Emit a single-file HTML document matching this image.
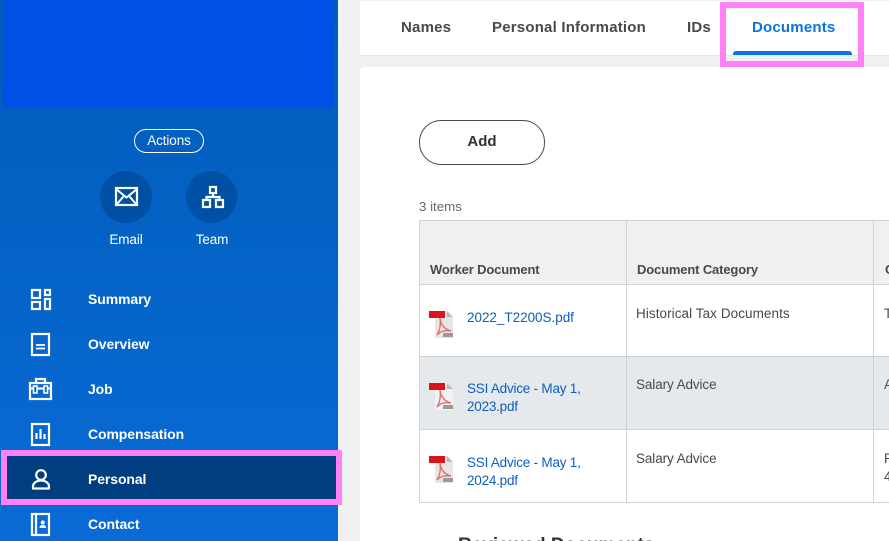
<!DOCTYPE html>
<html><head><meta charset="utf-8">
<style>
html,body{margin:0;padding:0;width:889px;height:541px;overflow:hidden;background:#eff0f2;font-family:"Liberation Sans",sans-serif;}
#root{position:relative;width:889px;height:541px;overflow:hidden;}
.a{position:absolute;white-space:nowrap;}
#side{left:0;top:0;width:338px;height:541px;background:linear-gradient(180deg,#005cb9 0%,#0a6bd6 100%);}
.nav{left:88px;color:#fff;font-weight:bold;font-size:14px;line-height:18px;letter-spacing:-.1px;}
.tab{top:18px;font-size:15px;font-weight:bold;line-height:20px;color:#494949;letter-spacing:.2px;}
.hd{top:262px;font-size:13px;font-weight:bold;color:#494949;line-height:16px;letter-spacing:-.15px;}
.lnk{left:467px;font-size:13.5px;line-height:18px;color:#0b5fc0;letter-spacing:-.22px;}
.cell{left:636px;font-size:13.5px;line-height:18px;color:#494949;letter-spacing:-.1px;}
.line{background:#d0d2d5;}
svg{position:absolute;overflow:visible;}
.pdf{filter:blur(.3px);}
</style></head><body>
<div id="root">
<div class="a" id="side"></div>
<div class="a" style="left:3px;top:0;width:331px;height:108px;background:#0050e6"></div>

<div class="a" style="left:134px;top:129px;width:68px;height:22px;border:1px solid #fff;border-radius:12px;color:#fff;font-size:13.5px;line-height:22px;text-align:center;letter-spacing:-.1px">Actions</div>

<div class="a" style="left:100px;top:171px;width:52px;height:52px;border-radius:50%;background:#0050a5"></div>
<div class="a" style="left:186px;top:171px;width:51px;height:52px;border-radius:50%;background:#0050a5"></div>
<svg style="left:115px;top:187px" width="23" height="19" fill="none" stroke="#fff" stroke-width="2.200"><rect x="1" y="1" width="21" height="17"/><path d="M1 2l10.500 8.500L22 2M2 17l6.500-7.500M21 17l-6.500-7.500" stroke-width="2"/></svg>
<svg style="left:200px;top:185px" width="25" height="24" fill="none" stroke="#fff" stroke-width="2.200"><rect x="10" y="2" width="6" height="6"/><rect x="3" y="15" width="7" height="7"/><rect x="16" y="15" width="7" height="7"/><path d="M13 9v3M6.500 14v-2h13v2"/></svg>
<div class="a" style="left:96px;width:60px;top:231px;text-align:center;color:#fff;font-size:13.5px;line-height:17px;letter-spacing:-.1px">Email</div>
<div class="a" style="left:182px;width:60px;top:231px;text-align:center;color:#fff;font-size:13.5px;line-height:17px;letter-spacing:-.1px">Team</div>

<svg style="left:30px;top:289px" width="21" height="21" fill="none" stroke="#fff" stroke-width="2.200"><rect x="2" y="1" width="8" height="8"/><rect x="15" y="1" width="5" height="5"/><rect x="2" y="13" width="8" height="7"/><rect x="15" y="10" width="5" height="10"/></svg>
<svg style="left:31px;top:333px" width="19" height="23" fill="none" stroke="#fff" stroke-width="2.200"><rect x="1" y="1" width="17" height="21"/><path d="M5 12h9M5 15.500h9" stroke-width="1.700"/></svg>
<svg style="left:29px;top:378px" width="23" height="22" fill="none" stroke="#fff" stroke-width="2.200"><rect x="1" y="5" width="21" height="16"/><path d="M7 5V1h9v4M1 10.500h21"/><rect x="4.500" y="8" width="3.500" height="7" stroke-width="1.600" fill="#0366cc"/><rect x="15" y="8" width="3.500" height="7" stroke-width="1.600" fill="#0366cc"/></svg>
<svg style="left:31px;top:423px" width="19" height="23" fill="none" stroke="#fff" stroke-width="2.200"><rect x="1" y="1" width="17" height="21"/><path d="M5.500 16v-6M9.500 16V6M13.500 16v-5"/></svg>

<div class="a" style="left:1px;top:450px;width:329px;height:43px;background:#003e7f;border:6px solid #ff80f7"></div>
<svg style="left:31px;top:468px" width="19" height="22" fill="none" stroke="#fff" stroke-width="2.200"><circle cx="10" cy="7" r="4.800"/><path d="M2 20.500v-2c0-3 3-6 8-6s8 3 8 6v2z" stroke-linejoin="round"/></svg>
<svg style="left:31px;top:513px" width="19" height="23" fill="none" stroke="#fff" stroke-width="2.200"><rect x="1" y="1" width="17" height="21"/><path d="M5 1v21"/><circle cx="11.800" cy="9.500" r="2" fill="#fff" stroke="none"/><path d="M8.500 15c0-2.500 1.500-3 3.300-3s3.200.5 3.200 3z" fill="#fff" stroke="none"/></svg>

<div class="a nav" style="top:290px">Summary</div>
<div class="a nav" style="top:335px">Overview</div>
<div class="a nav" style="top:380px">Job</div>
<div class="a nav" style="top:425px">Compensation</div>
<div class="a nav" style="top:470px">Personal</div>
<div class="a nav" style="top:515px">Contact</div>

<div class="a" style="left:360px;top:1px;width:529px;height:54px;background:#fff;border-bottom:1px solid #e2e4e6"></div>
<div class="a tab" style="left:401px">Names</div>
<div class="a tab" style="left:492px">Personal Information</div>
<div class="a tab" style="left:687px">IDs</div>
<div class="a tab" style="left:752px;color:#0875e1">Documents</div>
<div class="a" style="left:733px;top:51px;width:119px;height:4px;background:#0875e1;border-radius:3px 3px 0 0"></div>
<div class="a" style="left:720px;top:2px;width:132px;height:53px;border:6px solid #ff80f7"></div>

<div class="a" style="left:360px;top:67px;width:529px;height:474px;background:#fff;border-radius:4px 0 0 0"></div>

<div class="a" style="left:419px;top:120px;width:124px;height:43px;border:1px solid #494949;border-radius:22px;text-align:center;font-size:15px;font-weight:bold;line-height:42px;color:#333">Add</div>
<div class="a" style="left:419px;top:199px;font-size:13.3px;line-height:16px;color:#5e6a75">3 items</div>

<div class="a" style="left:419px;top:220px;width:470px;height:64px;background:#eff0f2"></div>
<div class="a" style="left:419px;top:357px;width:470px;height:72px;background:#e6e9ec"></div>
<div class="a line" style="left:419px;top:220px;width:470px;height:1px"></div>
<div class="a line" style="left:419px;top:284px;width:470px;height:1px"></div>
<div class="a line" style="left:419px;top:356px;width:470px;height:1px"></div>
<div class="a line" style="left:419px;top:429px;width:470px;height:1px"></div>
<div class="a line" style="left:419px;top:502px;width:470px;height:1px"></div>
<div class="a line" style="left:419px;top:220px;width:1px;height:283px"></div>
<div class="a line" style="left:626px;top:220px;width:1px;height:283px"></div>
<div class="a line" style="left:873px;top:220px;width:1px;height:283px"></div>

<div class="a hd" style="left:430px">Worker Document</div>
<div class="a hd" style="left:637px">Document Category</div>
<div class="a hd" style="left:885px">C</div>

<svg class="pdf" style="left:429px;top:310px" width="25" height="28"><path d="M6 1h12l6 6v21H6z" fill="#e6e6e6"/><path d="M18 1v6h6z" fill="#bbb"/><rect x="0" y="1" width="16" height="7" fill="#d8141c"/><path d="M11 8c1 7 4 11 11 13-6-1-10 0-14 4 3-5 4-11 3-17z" fill="none" stroke="#de7070" stroke-width="1.400"/><rect x="14" y="23" width="10" height="4" fill="#999"/></svg>
<svg class="pdf" style="left:429px;top:382px" width="25" height="28"><path d="M6 1h12l6 6v21H6z" fill="#f2f2f2"/><path d="M18 1v6h6z" fill="#bbb"/><rect x="0" y="1" width="16" height="7" fill="#d8141c"/><path d="M11 8c1 7 4 11 11 13-6-1-10 0-14 4 3-5 4-11 3-17z" fill="none" stroke="#de7070" stroke-width="1.400"/><rect x="14" y="23" width="10" height="4" fill="#999"/></svg>
<svg class="pdf" style="left:429px;top:455px" width="25" height="28"><path d="M6 1h12l6 6v21H6z" fill="#e6e6e6"/><path d="M18 1v6h6z" fill="#bbb"/><rect x="0" y="1" width="16" height="7" fill="#d8141c"/><path d="M11 8c1 7 4 11 11 13-6-1-10 0-14 4 3-5 4-11 3-17z" fill="none" stroke="#de7070" stroke-width="1.400"/><rect x="14" y="23" width="10" height="4" fill="#999"/></svg>

<div class="a lnk" style="top:309px;letter-spacing:-.03px">2022_T2200S.pdf</div>
<div class="a lnk" style="top:380px">SSI Advice - May 1,<br>2023.pdf</div>
<div class="a lnk" style="top:454px">SSI Advice - May 1,<br>2024.pdf</div>

<div class="a cell" style="top:305px;letter-spacing:.07px">Historical Tax Documents</div>
<div class="a cell" style="top:376px">Salary Advice</div>
<div class="a cell" style="top:450px">Salary Advice</div>
<div class="a cell" style="left:884px;top:305px">T</div>
<div class="a cell" style="left:884px;top:376px">A</div>
<div class="a cell" style="left:884px;top:450px">R<br>4</div>

<div class="a" style="left:458px;top:536px;font-size:19px;font-weight:bold;line-height:20px;color:#333">Reviewed Documents</div>
</div>
</body></html>
